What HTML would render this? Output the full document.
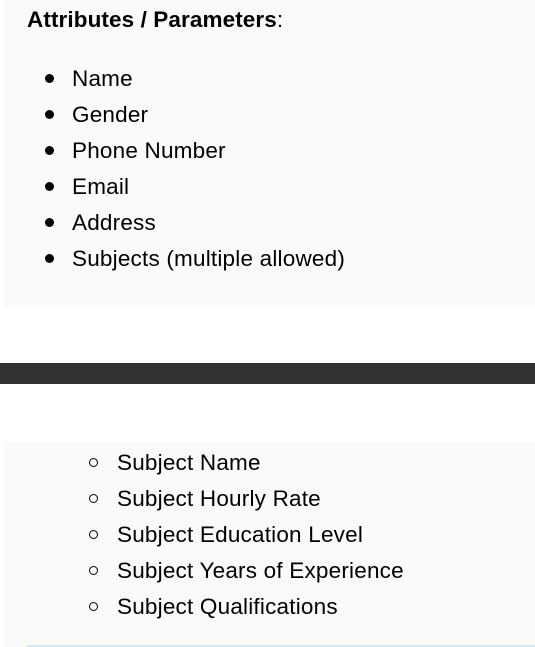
<!DOCTYPE html><html><head><style>
body{margin:0;width:535px;height:647px;background:#fff;font-family:"Liberation Sans",sans-serif;color:#000;position:relative;overflow:hidden}
.box{position:absolute;left:4px;right:0;background:#fafafa}
.t{position:absolute;font-size:22.5px;letter-spacing:0.2px;line-height:36px;white-space:nowrap}
.d{position:absolute;width:9px;height:9px;border-radius:50%;background:#000}
.c{position:absolute;width:7px;height:7px;border-radius:50%;border:1.6px solid #000}
</style></head><body>
<div class="box" style="top:0;height:307px"></div>
<div style="position:absolute;left:0;right:0;top:363px;height:21px;background:#333"></div>
<div class="box" style="top:442px;height:205px"></div>
<div style="position:absolute;left:27px;right:0;top:645px;height:2px;background:#c5eef5"></div>
<div class="t" style="left:27px;top:2px;letter-spacing:0.1px"><b>Attributes / Parameters</b>:</div>
<div class="d" style="left:45px;top:74px"></div><div class="t" style="left:72px;top:61px">Name</div>
<div class="d" style="left:45px;top:110px"></div><div class="t" style="left:72px;top:97px">Gender</div>
<div class="d" style="left:45px;top:146px"></div><div class="t" style="left:72px;top:133px">Phone Number</div>
<div class="d" style="left:45px;top:182px"></div><div class="t" style="left:72px;top:169px">Email</div>
<div class="d" style="left:45px;top:218px"></div><div class="t" style="left:72px;top:205px">Address</div>
<div class="d" style="left:45px;top:254px"></div><div class="t" style="left:72px;top:241px">Subjects (multiple allowed)</div>
<div class="c" style="left:89px;top:458px"></div><div class="t" style="left:117px;top:445px">Subject Name</div>
<div class="c" style="left:89px;top:494px"></div><div class="t" style="left:117px;top:481px">Subject Hourly Rate</div>
<div class="c" style="left:89px;top:530px"></div><div class="t" style="left:117px;top:517px">Subject Education Level</div>
<div class="c" style="left:89px;top:566px"></div><div class="t" style="left:117px;top:553px">Subject Years of Experience</div>
<div class="c" style="left:89px;top:602px"></div><div class="t" style="left:117px;top:589px">Subject Qualifications</div>
</body></html>
